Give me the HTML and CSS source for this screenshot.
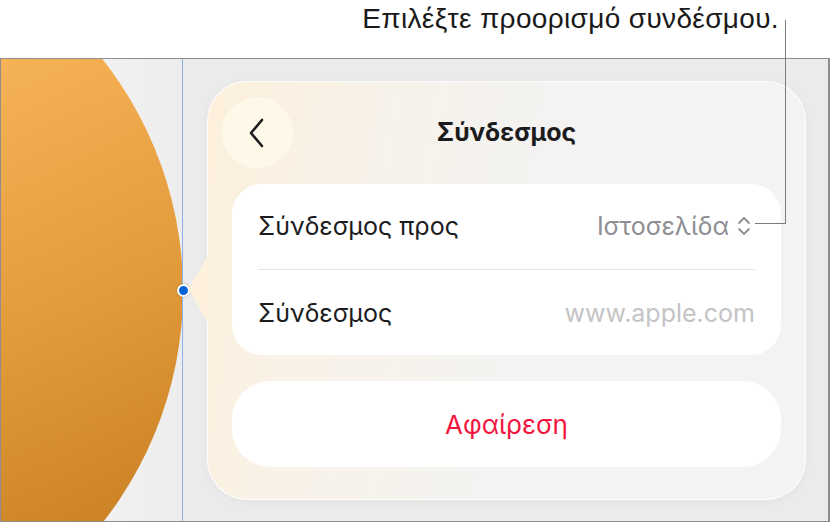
FILE: index.html
```html
<!DOCTYPE html>
<html lang="el">
<head>
    <meta charset="UTF-8">
    <meta name="viewport" content="width=device-width, initial-scale=1.0">
    <title>Σύνδεσμος</title>
    <link rel="stylesheet" href="styles.css">
</head>
<body>
    <p class="callout">Επιλέξτε προορισμό συνδέσμου.</p>
    <div class="leader"></div>

    <div class="stage">
        <div class="canvas">
            <div class="shape"></div>
        </div>

        <div class="sidebar">
            <div class="popover">
                <span class="popover-arrow"></span>

                <div class="popover-header">
                    <button class="back-button" aria-label="Πίσω">
                        <svg viewBox="0 0 20 32" fill="none" stroke="currentColor" stroke-width="2.6" stroke-linecap="round" stroke-linejoin="round">
                            <path d="M15 3 L4 16 L15 29"/>
                        </svg>
                    </button>
                    <h1 class="popover-title">Σύνδεσμος</h1>
                </div>

                <div class="group">
                    <div class="row">
                        <span class="row-label">Σύνδεσμος προς</span>
                        <span class="row-value">
                            Ιστοσελίδα
                            <svg class="updown" viewBox="0 0 14 22" fill="none" stroke="currentColor" stroke-width="1.8" stroke-linecap="round" stroke-linejoin="round">
                                <path d="M2 8 L7 3 L12 8"/>
                                <path d="M2 14 L7 19 L12 14"/>
                            </svg>
                        </span>
                    </div>
                    <div class="separator"></div>
                    <div class="row">
                        <span class="row-label">Σύνδεσμος</span>
                        <span class="row-value placeholder">www.apple.com</span>
                    </div>
                </div>

                <button class="remove-button">Αφαίρεση</button>
            </div>
        </div>

        <span class="handle"></span>
    </div>
</body>
</html>
```

FILE: styles.css
```css
* {
    margin: 0;
    padding: 0;
    box-sizing: border-box;
}

body {
    width: 830px;
    height: 524px;
    position: relative;
    background: #FFFFFF;
    font-family: 'Inter', 'Noto Sans', sans-serif;
    color: #1C1C1E;
    overflow: hidden;
}

/* caption above the screen */
.callout {
    height: 58px;
    padding: 3px 51px 0 0;
    text-align: right;
    font-family: 'Liberation Sans', Arial, sans-serif;
    font-size: 28px;
    line-height: 32px;
    letter-spacing: 0.35px;
    color: #1A1A1A;
}

.leader {
    position: absolute;
    left: 755px;
    top: 20px;
    width: 31px;
    height: 204px;
    border-right: 1.5px solid #7C7C7C;
    border-bottom: 1.5px solid #7C7C7C;
    z-index: 5;
}

/* screen frame */
.stage {
    position: relative;
    height: 464px;
    width: 830px;
    display: flex;
    border: 1.5px solid #8E8E8E;
    border-right-width: 2px;
    background: #EBEBEB;
}

.canvas {
    position: relative;
    width: 182px;
    overflow: hidden;
    background: linear-gradient(to right, #F7F7F7, #EDEDED);
    border-right: 1.5px solid #8DB0EA;
}

.shape {
    position: absolute;
    left: -566px;
    top: -142px;
    width: 748px;
    height: 748px;
    border-radius: 50%;
    background: linear-gradient(155deg, #F6B257 37%, #E39C3C 62%, #CB8325 84%);
}

.handle {
    position: absolute;
    left: 176px;
    top: 225px;
    width: 13px;
    height: 13px;
    border-radius: 50%;
    background: #0A64D6;
    border: 2px solid #FFFFFF;
    box-shadow: 0 0 2px rgba(0,0,0,0.35);
    z-index: 1;
}

.sidebar {
    flex: 1;
    padding: 22px 22px 21px 24px;
}

/* link popover */
.popover {
    position: relative;
    height: 100%;
    padding: 15px 24px 32px 14px;
    border-radius: 40px;
    border: 1px solid rgba(255,255,255,0.9);
    background: linear-gradient(100deg, #FDF0DC 0%, #F8F2E8 22%, #F4F3F1 50%, #F3F3F2 100%);
    box-shadow: 0 2px 10px rgba(0,0,0,0.04);
    display: flex;
    flex-direction: column;
    z-index: 2;
}

.popover-arrow {
    position: absolute;
    left: -20px;
    top: 170px;
    width: 22px;
    height: 74px;
    background: #FDF0DC;
    clip-path: polygon(100% 0, 8% 47%, 0 50%, 8% 53%, 100% 100%);
}

.popover-header {
    position: relative;
    height: 71px;
    display: flex;
    align-items: center;
    justify-content: center;
}

.back-button {
    position: absolute;
    left: 0;
    top: 0;
    width: 71px;
    height: 71px;
    border: none;
    border-radius: 50%;
    background: #FEF8E9;
    color: #1C1C1E;
    display: flex;
    align-items: center;
    justify-content: center;
}

.back-button svg {
    width: 20px;
    height: 32px;
    margin-left: -2px;
}

.popover-title {
    margin-left: 10px;
    font-size: 25px;
    font-weight: 700;
}

.group {
    margin: 16px 0 0 10px;
    background: #FFFFFF;
    border-radius: 30px;
    padding: 0 26px;
}

.row {
    height: 85px;
    display: flex;
    align-items: center;
    justify-content: space-between;
    font-size: 25px;
}

.row-value {
    display: flex;
    align-items: center;
    gap: 8px;
    color: #8E8E93;
}

.row-value.placeholder {
    color: #C4C4C6;
}

.updown {
    width: 14px;
    height: 22px;
    margin-right: 4px;
}

.separator {
    height: 1.5px;
    background: #E5E5E7;
}

.remove-button {
    margin: 26px 0 0 10px;
    height: 86px;
    border: none;
    border-radius: 38px;
    background: #FFFFFF;
    font-family: inherit;
    font-size: 26px;
    color: #F2163E;
}
```
